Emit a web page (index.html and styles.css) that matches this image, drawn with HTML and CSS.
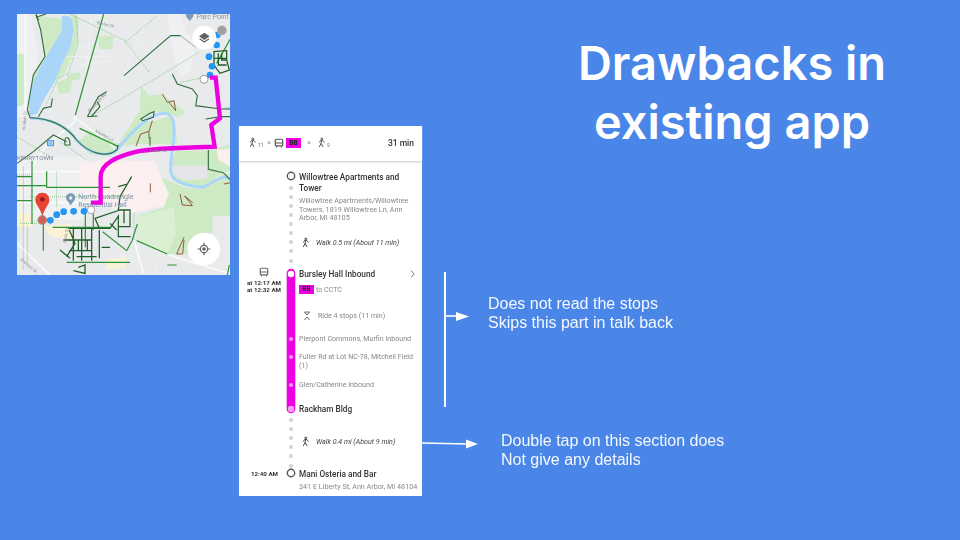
FILE: index.html
```html
<!DOCTYPE html>
<html lang="en">
<head>
<meta charset="utf-8">
<title>Drawbacks in existing app</title>
<link rel="stylesheet" href="styles.css">
</head>
<body>
<main class="slide">
  <svg class="map" viewBox="21 12 639 783" aria-label="Route map">
    <rect x="21" y="12" width="639" height="783" fill="#e9eaec"/>
    <!-- blocks -->
    <g fill="#eff0f1">
      <path d="M21 12 H60 L85 130 L60 320 H21Z"/>
      <path d="M470 12 H510 L530 70 L560 100 L540 190 L510 200 L490 130Z"/>
      <path d="M21 440 H230 V630 H21Z"/>
    </g>
    <!-- parks -->
    <g fill="#cdeac5">
      <path d="M81 17 L156 27 L154 72 L121 137 L81 197 L59 262 L53 300 L71 192 L106 147 L96 72Z"/>
      <path d="M181 12 L206 22 L203 100 L165 190 L135 215 L106 262 L136 212 L156 162 L181 112 L191 62 L186 27Z"/>
      <path d="M141 217 L171 207 L171 192 L211 187 L211 207 L186 212 L181 247 L146 252Z"/>
      <path d="M266 77 L311 77 L306 117 L266 117Z"/>
      <path d="M21 132 L43 132 L43 282 L21 292Z"/>
      <path d="M392 227 L417 257 L457 252 L527 307 L502 322 L467 307 L427 307 L392 332 L342 407 L382 402 L462 402 L502 400 L492 332 L472 320 L427 335 L400 330 L380 360 L340 405 L320 412 L390 300Z"/>
      <path d="M205 395 L240 362 L332 405 L300 432 L240 432Z"/>
      <path d="M497 422 L592 422 L662 402 L662 482 L637 487 L582 532 L522 527 L484 492 L490 440Z"/>
      <path d="M452 502 L522 532 L582 537 L637 492 L662 490 L662 617 L607 617 L607 667 L532 702 L532 732 L472 732 L382 692 L382 617 L462 592 L472 552Z"/>
    </g>
    <path fill="#d9f0d2" d="M382 620 L492 592 L497 672 L472 732 L382 692Z"/>
    <path fill="#fbeff0" d="M210 462 L270 452 L300 442 L342 452 L432 452 L477 552 L462 587 L372 607 L342 612 L290 585 L235 575 L210 535Z"/>
    <path fill="#fbeff0" d="M620 420 L662 415 L662 470 L625 450Z"/>
    <path fill="#fbf1d4" d="M21 610 H60 L68 650 L21 650Z M100 650 L185 640 L190 690 L125 680Z M290 748 L350 742 L345 775 L290 780Z"/>
    <path fill="#e4e6e9" d="M484 467 L592 467 L592 505 L520 512 L486 490Z"/>
    <!-- roads -->
    <g fill="none" stroke="#f9fafb" stroke-width="5">
      <path d="M46 12 V320"/>
      <path d="M21 485 H210 M21 578 H250"/>
      <path d="M190 320 L300 400 L320 420"/>
      <path d="M60 480 L110 405 L190 340 L200 320"/>
      <path d="M372 690 L400 790"/>
      <path d="M477 735 L662 792"/>
      <path d="M21 700 L120 795"/>
    </g>
    <g fill="none" stroke="#f2f3f4" stroke-width="2.2">
      <path d="M150 140 H300 M200 105 L290 130 M190 170 L300 150 M245 20 L225 250 M350 60 L460 160 M410 30 L330 220"/>
      <path d="M345 680 L320 795 M450 720 L430 795 M40 540 H60 M120 500 H200"/>
    </g>
    <!-- water -->
    <path fill="#a9d5f8" d="M156 17 L155 62 L126 112 L96 162 L71 212 L59 262 L56 318 L81 312 L106 262 L136 212 L156 162 L181 112 L191 62 L186 27 L171 17Z"/>
    <path fill="none" stroke="#a9d5f8" stroke-width="9" d="M60 324 C110 325 165 342 200 390 C235 430 290 445 320 420 C370 360 420 305 470 310 C510 325 485 405 482 470 C478 505 500 525 580 532 C620 510 640 490 662 510"/>
    <path d="M645 295 H662" stroke="#a9d5f8" stroke-width="6"/>
    <!-- dotted paths -->
    <g fill="none" stroke="#69bf70" stroke-width="2.6" stroke-dasharray="2.6 3.4">
      <path d="M195 12 C205 50 200 80 205 100 L175 190 L145 205 L100 300"/>
      <path d="M180 12 L345 92 L420 190 M440 18 L342 100"/>
      <path d="M240 320 L275 300 L342 262 L567 127"/>
      <path d="M512 217 L582 202"/>
      <path d="M21 495 H65 M40 470 V780 M30 640 H108 M140 485 V590 M60 560 H340 M52 650 V760"/>
      <path d="M372 610 V690"/>
      <path d="M21 380 L120 440 M150 395 L230 450"/>
    </g>
    <!-- mid-green cycle lines -->
    <g fill="none" stroke="#2f9437" stroke-width="3.6">
      <path d="M281 12 L196 315"/>
      <path d="M209 355 L325 410"/>
      <path d="M66 452 V642 M110 484 V532 H300 M21 527 H110 M100 636 V722"/>
      <path d="M21 572 H66 M21 500 H66"/>
      <path d="M380 692 L472 732"/>
      <path d="M170 757 H360 M472 765 H500 M658 765 L652 795"/>
      <path d="M278 665 L350 722 L366 692 L382 642"/>
      <path d="M128 652 H300 M226 592 V712 M250 610 V660"/>
      <path d="M620 160 L662 85"/>
    </g>
    <!-- dark lines -->
    <g fill="none" stroke="#356f3d" stroke-width="3.4">
      <path d="M78 12 L92 60 L105 140 L70 195 L52 300 L60 323 C110 325 165 342 200 390 C235 430 290 445 320 420 C325 415 320 410 325 405"/>
      <path d="M78 22 L108 12 M86 30 L78 14"/>
      <path d="M85 320 L100 295 L122 290 M127 265 L123 292" />
      <path d="M232 320 L265 260 L290 245 M245 318 L270 290 L262 275 M232 320 L262 318"/>
      <path d="M342 197 L482 77 L512 77"/>
      <path d="M392 327 L420 310 L432 305 L430 322 L398 332Z"/>
      <path d="M170 395 L130 375 L70 425 L21 460 M165 405 C160 375 180 375 180 405Z"/>
      <path d="M487 192 L502 222 L547 237 L562 257 L557 287 L632 297 L662 297"/>
      <path d="M587 327 L632 320 L662 320"/>
      <path d="M595 420 V478 L640 488 L662 510"/>
      <path d="M420 380 V407"/>
    </g>
    <path d="M512 77 L557 112" fill="none" stroke="#a8a49a" stroke-width="3"/>
    <g fill="none" stroke="#1e5f28" stroke-width="3.8">
      <path d="M175 655 H300 L325 618 V680 H362 M190 655 V752 M215 655 V752 M245 655 V752 M178 690 H245 M178 722 H245 M178 660 L195 700 L170 740 M268 660 V745 M275 712 H300 M205 690 V722 M232 690 V722 M200 740 H260"/>
      <path d="M205 772 L225 765 V790 L190 782 M160 690 H180 M150 720 L180 745 M300 640 L320 660"/>
      <path d="M325 530 L352 522 L365 500 M352 522 L330 560 L325 600 H360 V650 H325 M342 600 V640 M268 655 L255 625 L330 600"/>
      <path d="M610 125 L650 122 V150 L658 180 L630 190 L612 165 V125 M625 130 V165 H650 M635 130 V150 H650 M612 145 H650"/>
    </g>
    <g fill="none" stroke="#8b4f2f" stroke-width="2.8">
      <path d="M378 408 L392 372 L417 364 L427 332 M417 364 V385"/>
      <path d="M457 252 L472 277 L492 272 L497 302 L477 277"/>
      <path d="M421 520 V547"/>
      <path d="M510 552 L517 585 L547 587 L524 558 L548 578"/>
      <path d="M500 732 L522 682 M500 732 H518 L522 690"/>
      <path d="M642 522 L662 518"/>
    </g>
    <g class="map-label" font-size="13" fill="#8a8f96">
      <text x="260" y="42" transform="rotate(12 260 42)">Barton Dr</text>
      <text x="240" y="308" transform="rotate(-48 240 308)" fill="#6f7a70">Plymouth Rd</text>
      <text x="255" y="366" transform="rotate(28 255 366)">Maiden Ln</text>
      <text x="46" y="360" transform="rotate(-85 46 360)">N Main St</text>
      <text x="30" y="750" transform="rotate(40 30 750)">Division St</text>
      <text x="168" y="700" transform="rotate(-80 168 700)">State St</text>
    </g>
    <text class="map-label" x="21" y="451" font-size="18.5" fill="#7f8a9c">KERRYTOWN</text>
    <text class="map-label" x="205" y="566" font-size="21" fill="#7c93a8">North Quadrangle</text>
    <text class="map-label" x="205" y="592" font-size="21" fill="#7c93a8">Residential Hall</text>
    <text class="map-label" x="560" y="28" font-size="21" fill="#8a93a0">Parc Point</text>
    <path d="M527 12 H551 C551 22 545 25 539 33 C533 25 527 22 527 12Z" fill="#7d9bb5"/>
    <path d="M182 550 c-10 0 -15 8 -14 14 c1 8 10 14 14 22 c4 -8 13 -14 14 -22 c1 -6 -4 -14 -14 -14Z" fill="#7d9bb5"/>
    <circle cx="182" cy="564" r="5" fill="#e9eaec"/>
    <rect x="111" y="390" width="21" height="19" rx="3" fill="#3f97ee"/>
    <path d="M116 394 H127 V405 H116Z M116 399 H127" fill="none" stroke="#fff" stroke-width="2"/>
    <g fill="#2196f3">
      <circle cx="121" cy="631" r="10"/><circle cx="140" cy="614" r="10"/><circle cx="161" cy="605" r="10"/>
      <circle cx="191" cy="604" r="10"/><circle cx="222" cy="604" r="10"/>
      <circle cx="597" cy="140" r="10"/><circle cx="606" cy="169" r="10"/><circle cx="600" cy="195" r="10"/>
      <circle cx="620" cy="105" r="10"/><circle cx="622" cy="75" r="10"/>
    </g>
    <path d="M243 578 H272 V500 C272 460 320 440 380 425 C420 415 540 412 614 410 L604 345 L630 325 L617 203 H600" fill="none" stroke="#ec00e0" stroke-width="13"/>
    <text class="map-label" x="420" y="427" font-size="13" fill="#7a8a7a">Fuller Rd</text>
    <circle cx="243" cy="600" r="11" fill="#fff" stroke="#9a9a9a" stroke-width="2.5"/>
    <circle cx="582" cy="208" r="12" fill="#fff" stroke="#8a8a8a" stroke-width="2.5"/>
    <circle cx="97" cy="630" r="13" fill="#e25b4c" stroke="#8e8e8e" stroke-width="3"/>
    <path d="M97 548 c-13 0 -21 10 -21 21 c0 16 15 24 21 50 c6 -26 21 -34 21 -50 c0 -11 -8 -21 -21 -21Z" fill="#ea4335"/>
    <circle cx="97" cy="568" r="7" fill="#8d1c15"/>
    <path d="M97 615 V632" stroke="#7b7b7b" stroke-width="2"/>
    <circle cx="636" cy="61" r="14" fill="#a0a0a0" stroke="#c2c2c2" stroke-width="2"/>
    <circle cx="583" cy="83" r="36" fill="#fff"/>
    <path d="M583 68 L599 79 L583 90 L567 79Z" fill="#616161"/>
    <path d="M569 86 L583 96 L597 86" fill="none" stroke="#616161" stroke-width="3.5"/>
    <circle cx="582" cy="717" r="49" fill="#fff"/>
    <circle cx="582" cy="717" r="11" fill="none" stroke="#616161" stroke-width="3.5"/>
    <circle cx="582" cy="717" r="5.5" fill="#616161"/>
    <path d="M582 698 V705 M582 729 V736 M563 717 H570 M594 717 H601" stroke="#616161" stroke-width="3.5"/>
  </svg>

  <section class="phone">
    <header class="trip">
      <svg class="walker" viewBox="0 0 12 14"><path d="M6.5 1.2a1.2 1.2 0 1 1-.1 0ZM5 4 L8 4.5 L10 7 M5 4 L3 7 M6 4.5 L5.5 8 L8 13 M5.5 8 L3 13" fill="none" stroke="#555" stroke-width="1.3"/></svg>
      <span class="sub">11</span>
      <span class="chev">&gt;</span>
      <svg class="bus" viewBox="0 0 12 12"><rect x="1.5" y="1.5" width="9" height="8" rx="1.5" fill="none" stroke="#555" stroke-width="1.4"/><path d="M1.5 6 H10.5 M3 10 V11.5 M9 10 V11.5" stroke="#555" stroke-width="1.4"/></svg>
      <span class="badge">BB</span>
      <span class="chev chev-wide">&gt;</span>
      <svg class="walker" viewBox="0 0 12 14"><path d="M6.5 1.2a1.2 1.2 0 1 1-.1 0ZM5 4 L8 4.5 L10 7 M5 4 L3 7 M6 4.5 L5.5 8 L8 13 M5.5 8 L3 13" fill="none" stroke="#555" stroke-width="1.3"/></svg>
      <span class="sub">9</span>
      <strong class="total">31 min</strong>
    </header>

    <div class="timeline">
      <svg class="rail" viewBox="0 0 20 335" aria-hidden="true">
        <g fill="#cfd4d9">
          <circle cx="10" cy="26" r="2"/><circle cx="10" cy="35" r="2"/><circle cx="10" cy="44" r="2"/><circle cx="10" cy="53" r="2"/><circle cx="10" cy="62" r="2"/><circle cx="10" cy="71" r="2"/><circle cx="10" cy="80" r="2"/><circle cx="10" cy="89" r="2"/><circle cx="10" cy="99" r="2"/>
          <circle cx="10" cy="258" r="2"/><circle cx="10" cy="267" r="2"/><circle cx="10" cy="276" r="2"/><circle cx="10" cy="285" r="2"/><circle cx="10" cy="294" r="2"/><circle cx="10" cy="304" r="2"/>
        </g>
        <path d="M10 111 V247" stroke="#ee00e4" stroke-width="8.6" stroke-linecap="round"/>
        <circle cx="10" cy="112" r="3.2" fill="#fff"/>
        <g fill="#f6a0f0"><circle cx="10" cy="177" r="2"/><circle cx="10" cy="195" r="2"/><circle cx="10" cy="223" r="2"/><circle cx="10" cy="247" r="3.2"/></g>
        <circle cx="10" cy="14" r="3.7" fill="#fff" stroke="#555" stroke-width="1.4"/>
        <circle cx="10" cy="311" r="3.7" fill="#fff" stroke="#555" stroke-width="1.4"/>
      </svg>

      <div class="row stop first">
        <div class="when"></div>
        <div class="what"><p class="name">Willowtree Apartments and Tower</p>
          <p class="addr">Willowtree Apartments/Willowtree Towers, 1819 Willowtree Ln, Ann Arbor, MI 48105</p></div>
      </div>
      <div class="row note walk-a">
        <div class="when"></div>
        <div class="what walk"><svg class="walker" viewBox="0 0 12 14"><path d="M6.5 1.2a1.2 1.2 0 1 1-.1 0ZM5 4 L8 4.5 L10 7 M5 4 L3 7 M6 4.5 L5.5 8 L8 13 M5.5 8 L3 13" fill="none" stroke="#444" stroke-width="1.3"/></svg><em>Walk 0.5 mi (About 11 min)</em></div>
      </div>
      <div class="row stop board">
        <div class="when">
          <svg class="bus" viewBox="0 0 12 12"><rect x="1.5" y="1.5" width="9" height="8" rx="1.5" fill="none" stroke="#666" stroke-width="1.4"/><path d="M1.5 6 H10.5 M3 10 V11.5 M9 10 V11.5" stroke="#666" stroke-width="1.4"/></svg>
          <b>at 12:17 AM</b><b>at 12:32 AM</b>
        </div>
        <div class="what">
          <p class="name headline">Bursley Hall Inbound<svg class="more" viewBox="0 0 5 8"><path d="M1 0.7 L4.2 4 L1 7.3" fill="none" stroke="#666" stroke-width="0.9"/></svg></p>
          <p class="line-to"><span class="badge">BB</span> to CCTC</p>
          <p class="ride"><svg class="expand" viewBox="0 0 8 10"><path d="M1.5 1 H6.5 L4 4Z M1.5 9 L4 6 L6.5 9" fill="none" stroke="#555" stroke-width="0.9"/></svg>Ride 4 stops (11 min)</p>
          <p class="passed pierpont">Pierpont Commons, Murfin Inbound</p>
          <p class="passed fuller">Fuller Rd at Lot NC-78, Mitchell Field (1)</p>
          <p class="passed glen">Glen/Catherine Inbound</p>
          <p class="name rackham">Rackham Bldg</p>
        </div>
      </div>
      <div class="row note walk-b">
        <div class="when"></div>
        <div class="what walk"><svg class="walker" viewBox="0 0 12 14"><path d="M6.5 1.2a1.2 1.2 0 1 1-.1 0ZM5 4 L8 4.5 L10 7 M5 4 L3 7 M6 4.5 L5.5 8 L8 13 M5.5 8 L3 13" fill="none" stroke="#444" stroke-width="1.3"/></svg><em>Walk 0.4 mi (About 9 min)</em></div>
      </div>
      <div class="row stop arrive">
        <div class="when"><b>12:40 AM</b></div>
        <div class="what"><p class="name">Mani Osteria and Bar</p>
          <p class="addr">341 E Liberty St, Ann Arbor, MI 48104</p></div>
      </div>
    </div>
  </section>

  <h1 class="title">Drawbacks in<br>existing app</h1>

  <svg class="notes-art" viewBox="0 0 70 180" aria-hidden="true">
    <path d="M24 0 V135" stroke="#fff" stroke-width="2"/>
    <path d="M25 44 H36" stroke="#fff" stroke-width="1.6"/>
    <path d="M35 40 L48 44.5 L35 49Z" fill="#fff"/>
  </svg>
  <svg class="arrow-b" viewBox="0 0 58 12" aria-hidden="true">
    <path d="M0 5 L46 6" stroke="#fff" stroke-width="1.6"/>
    <path d="M44 1.5 L56 6 L44 10.5Z" fill="#fff"/>
  </svg>

  <p class="note-text note-one">Does not read the stops<br>Skips this part in talk back</p>
  <p class="note-text note-two">Double tap on this section does<br>Not give any details</p>
</main>
</body>
</html>
```
FILE: styles.css
```css
* { box-sizing: border-box; }
html, body { margin: 0; padding: 0; }
body { background: #4a86e8; }
p, h1 { margin: 0; }

.slide {
  position: relative;
  width: 960px;
  height: 540px;
  overflow: hidden;
  background: #4a86e8;
  font-family: "Liberation Sans", Arial, sans-serif;
  color: #fff;
}

.map {
  position: absolute;
  left: 17px;
  top: 14px;
  width: 213px;
  height: 261px;
  filter: blur(0.5px);
}
.map-label { font-family: Roboto, sans-serif; }

.phone {
  position: absolute;
  left: 239px;
  top: 126px;
  width: 183px;
  height: 370px;
  background: #fff;
  color: #333;
  font-family: Roboto, sans-serif;
  filter: blur(0.35px);
  display: flex;
  flex-direction: column;
}

.trip {
  display: flex;
  align-items: center;
  height: 36px;
  padding: 0 8px 2px 9px;
  border-bottom: 1px solid #dcdcdc;
  box-shadow: 0 1px 1px #eee;
  flex: none;
}
.walker { width: 9px; height: 11px; flex: none; }
.bus { width: 10px; height: 10px; flex: none; }
.sub { font-size: 5px; color: #666; margin: 4px 0 0 1px; width: 6px; }
.chev { font-size: 7px; color: #777; width: 10px; text-align: center; }
.chev-wide { width: 16px; }
.badge {
  display: inline-block;
  width: 15px;
  height: 10px;
  margin-left: 2px;
  background: #ee00e4;
  color: #222;
  font-size: 6.5px;
  font-weight: 700;
  line-height: 10px;
  text-align: center;
}
.total { margin-left: auto; font-size: 8.5px; font-weight: 500; color: #333; }

.timeline { position: relative; flex: 1; }
.rail { position: absolute; left: 41.5px; top: 0; width: 20px; height: 335px; }

.row { display: grid; grid-template-columns: 60px 1fr; position: relative; }
.when { display: flex; flex-direction: column; align-items: flex-end; padding-right: 18px; font-size: 6.2px; line-height: 7.6px; }
.when b { font-weight: 700; white-space: nowrap; color: #333; }
.when .bus { align-self: flex-start; margin: 0 0 3px 20px; }
.name { font-size: 8.25px; line-height: 10.5px; font-weight: 500; color: #333; }
.addr { font-size: 7.2px; line-height: 8.6px; color: #888; }

.first { padding-top: 10px; }
.first .what { padding-right: 10px; }
.first .addr { margin-top: 4px; }
.walk { display: flex; align-items: center; padding-left: 2px; font-size: 7.1px; color: #444; height: 12px; }
.walk em { margin-left: 6px; }
.walk-a { margin-top: 14px; }
.board { margin-top: 20px; }
.board .when { margin-top: -2px; }
.headline { position: relative; height: 11px; }
.more { position: absolute; right: 7px; top: 1px; width: 5px; height: 8px; }
.line-to { margin-top: 5px; height: 9px; font-size: 7.1px; line-height: 9px; color: #888; display: flex; align-items: center; gap: 2px; }
.line-to .badge { margin-left: 0; height: 9px; line-height: 9px; }
.ride { display: flex; align-items: center; margin-top: 17px; height: 10px; font-size: 7.1px; color: #888; padding-left: 4px; }
.expand { width: 8px; height: 10px; margin-right: 7px; }
.passed { font-size: 7.1px; line-height: 9px; color: #888; padding-right: 2px; }
.pierpont { margin-top: 13px; }
.fuller { margin-top: 9px; }
.glen { margin-top: 10px; }
.rackham { margin-top: 15px; }
.walk-b { margin-top: 21px; }
.arrive { margin-top: 22px; }
.arrive .when { padding-top: 2px; padding-right: 21px; }
.arrive .addr { margin-top: 3px; }

.title {
  position: absolute;
  left: 500px;
  top: 33px;
  width: 464px;
  text-align: center;
  font-family: Inter, sans-serif;
  font-weight: 600;
  font-size: 47px;
  line-height: 59px;
}

.notes-art { position: absolute; left: 421px; top: 272px; width: 70px; height: 180px; }
.arrow-b { position: absolute; left: 422px; top: 438px; width: 58px; height: 12px; }

.note-text { position: absolute; font-size: 16px; line-height: 19px; white-space: nowrap; opacity: 0.94; }
.note-one { left: 488px; top: 294px; }
.note-two { left: 501px; top: 431px; }
```
